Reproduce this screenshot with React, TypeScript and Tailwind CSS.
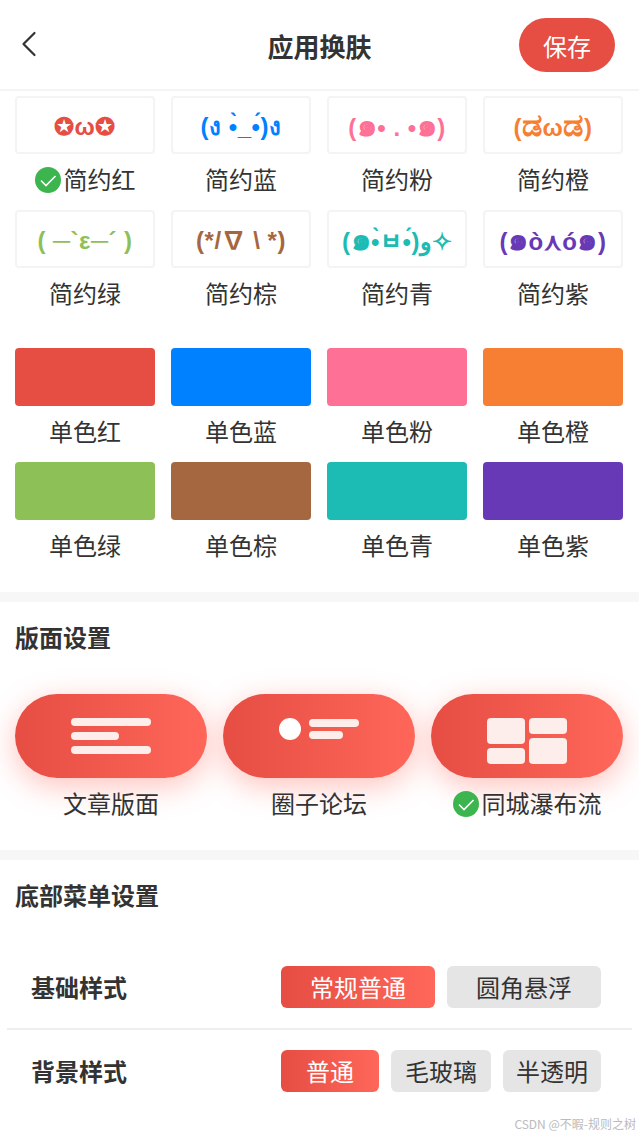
import { ChevronLeft } from 'lucide-react'

const simple = [
  { name: '简约红', face: '✪ω✪', color: 'text-[#e64d43]', checked: true },
  { name: '简约蓝', face: '(ง •̀_•́)ง', color: 'text-[#0081ff]' },
  { name: '简约粉', face: '(๑• . •๑)', color: 'text-[#ff7096]' },
  { name: '简约橙', face: '(ಡωಡ)', color: 'text-[#f67f34]' },
  { name: '简约绿', face: '( ─`ε─´ )', color: 'text-[#8dc057]' },
  { name: '简约棕', face: '(*/∇ \\ *)', color: 'text-[#a5673f]' },
  { name: '简约青', face: '(๑•̀ㅂ•́)و✧', color: 'text-[#1cbbb4]' },
  { name: '简约紫', face: '(๑ò⋏ó๑)', color: 'text-[#6739b6]' },
]

const solid = [
  { name: '单色红', color: 'bg-[#e64d43]' },
  { name: '单色蓝', color: 'bg-[#0081ff]' },
  { name: '单色粉', color: 'bg-[#ff7096]' },
  { name: '单色橙', color: 'bg-[#f67f34]' },
  { name: '单色绿', color: 'bg-[#8dc057]' },
  { name: '单色棕', color: 'bg-[#a5673f]' },
  { name: '单色青', color: 'bg-[#1cbbb4]' },
  { name: '单色紫', color: 'bg-[#6739b6]' },
]

// ๑ 和 ಡ 在这里的备用字体偏小，单独放大
function Face({ text }: { text: string }) {
  return (
    <>
      {text.split(/([๑ಡ])/).map((part, i) =>
        part === '๑' || part === 'ಡ' ? (
          <span key={i} className="text-[32px] leading-none">
            {part}
          </span>
        ) : (
          part
        ),
      )}
    </>
  )
}

function Check() {
  return (
    <svg width="26" height="26" viewBox="0 0 26 26" className="mr-[3px] mt-px shrink-0">
      <circle cx="13" cy="13" r="13" fill="#3db54e" />
      <path d="M6 13.5 L11 18.5 L20.5 9" fill="none" stroke="#fff" strokeWidth="1.6" />
    </svg>
  )
}

function Label({ text, checked }: { text: string; checked?: boolean }) {
  return (
    <div className="flex h-[52px] items-center justify-center pb-[2px] text-[24px] text-[#333]">
      {checked && <Check />}
      <span>{text}</span>
    </div>
  )
}

function Choice({ text, active, className }: { text: string; active?: boolean; className: string }) {
  return (
    <div
      className={`flex h-[42px] items-center justify-center rounded-md text-[24px] ${className} ${
        active ? 'bg-gradient-to-r from-[#e64d43] to-[#ff675a] text-white' : 'bg-[#e5e5e5] text-[#333]'
      }`}
    >
      {text}
    </div>
  )
}

export default function App() {
  return (
    <div className="relative h-[1136px] w-[639px] overflow-hidden bg-white font-['Noto_Sans_CJK_SC','Noto_Sans',sans-serif] text-[#333]">
      {/* 顶部栏 */}
      <header className="grid h-[91px] grid-cols-[1fr_auto_1fr] items-center border-b-2 border-[#f4f4f4] px-[7px]">
        <ChevronLeft size={44} strokeWidth={1.2} className="-mt-px text-[#333]" />
        <h1 className="pt-[2px] text-[26px] font-bold">应用换肤</h1>
        <button className="mr-[17px] h-[54px] w-[96px] justify-self-end rounded-full bg-[#e64d43] pt-[2px] text-[24px] text-white">保存</button>
      </header>

      {/* 皮肤 */}
      <section className="px-[15px] pb-5 pt-[5px]">
        <div className="grid grid-cols-[repeat(4,140px)] gap-x-4 gap-y-1">
          {simple.map((s) => (
            <div key={s.name}>
              <div className={`flex h-[58px] items-center justify-center whitespace-pre rounded border-2 border-[#f4f4f4] pt-1 font-['Liberation_Sans','Noto_Sans_CJK_SC',sans-serif] text-[24px] font-bold tracking-[0.5px] ${s.color}`}>
                <span>
                  <Face text={s.face} />
                </span>
              </div>
              <Label text={s.name} checked={s.checked} />
            </div>
          ))}
        </div>
        <div className="mt-7 grid grid-cols-[repeat(4,140px)] gap-x-4 gap-y-1">
          {solid.map((s) => (
            <div key={s.name}>
              <div className={`h-[58px] rounded ${s.color}`} />
              <Label text={s.name} />
            </div>
          ))}
        </div>
      </section>

      <div className="h-2.5 bg-[#f7f7f7]" />

      {/* 版面设置 */}
      <section className="px-[15px] pb-5">
        <h2 className="flex h-[72px] items-center pb-[2px] text-[24px] font-bold">版面设置</h2>
        <div className="mt-5 grid grid-cols-[repeat(3,192px)] gap-4">
          <div>
            <div className="flex h-[84px] flex-col items-center justify-center gap-[6px] rounded-full bg-gradient-to-r from-[#e64d43] to-[#ff675a] shadow-[0_8px_30px_rgba(255,103,90,0.4)]">
              <i className="h-2 w-20 rounded-full bg-[#fdeeec]" />
              <i className="mr-8 h-2 w-12 rounded-full bg-[#fdeeec]" />
              <i className="h-2 w-20 rounded-full bg-[#fdeeec]" />
            </div>
            <Label text="文章版面" />
          </div>
          <div>
            <div className="flex h-[84px] items-center justify-center gap-2 rounded-full bg-gradient-to-r from-[#e64d43] to-[#ff675a] pb-[14px] shadow-[0_8px_30px_rgba(255,103,90,0.4)]">
              <i className="h-[22px] w-[22px] rounded-full bg-white" />
              <div className="flex flex-col gap-1">
                <i className="h-2 w-[50px] rounded-full bg-[#fdeeec]" />
                <i className="h-2 w-[34px] rounded-full bg-[#fdeeec]" />
              </div>
            </div>
            <Label text="圈子论坛" />
          </div>
          <div>
            <div className="flex h-[84px] items-center justify-center gap-1 rounded-full bg-gradient-to-r from-[#e64d43] to-[#ff675a] pt-[10px] shadow-[0_8px_30px_rgba(255,103,90,0.4)]">
              <div className="flex flex-col gap-1">
                <i className="h-[26px] w-[38px] rounded bg-[#fdeeec]" />
                <i className="h-4 w-[38px] rounded bg-[#fdeeec]" />
              </div>
              <div className="flex flex-col gap-1">
                <i className="h-4 w-[38px] rounded bg-[#fdeeec]" />
                <i className="h-[26px] w-[38px] rounded bg-[#fdeeec]" />
              </div>
            </div>
            <Label text="同城瀑布流" checked />
          </div>
        </div>
      </section>

      <div className="h-2.5 bg-[#f7f7f7]" />

      {/* 底部菜单设置 */}
      <section>
        <h2 className="flex h-[72px] items-center px-[15px] pb-[2px] text-[24px] font-bold">底部菜单设置</h2>
        <div className="mx-[7px] mt-[14px] w-[625px]">
          <div className="flex h-[84px] items-center justify-between border-b-2 border-[#eee] pl-6 pr-[31px]">
            <span className="text-[24px] font-bold">基础样式</span>
            <div className="flex gap-3">
              <Choice text="常规普通" active className="w-[154px] pb-[1px]" />
              <Choice text="圆角悬浮" className="w-[154px] pb-[1px]" />
            </div>
          </div>
          <div className="flex h-[82px] items-center justify-between pl-6 pr-[31px]">
            <span className="text-[24px] font-bold">背景样式</span>
            <div className="flex gap-3">
              <Choice text="普通" active className="w-[98px]" />
              <Choice text="毛玻璃" className="w-[100px]" />
              <Choice text="半透明" className="w-[98px]" />
            </div>
          </div>
        </div>
      </section>

      {/* 水印 */}
      <div className="absolute bottom-[3px] right-[3px] text-[12px] text-[#bbb]">CSDN @不暇-规则之树</div>
    </div>
  )
}
